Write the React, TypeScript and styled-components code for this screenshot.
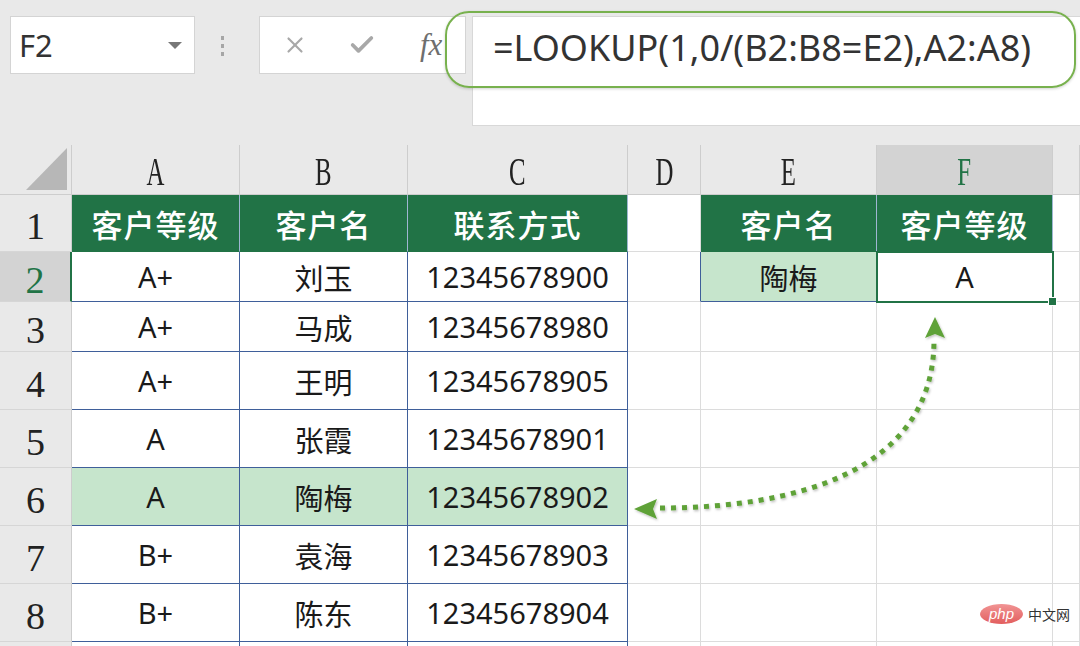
import styled, { createGlobalStyle } from 'styled-components';
import { X, Check } from 'lucide-react';

const GlobalStyle = createGlobalStyle`
  html, body {
    margin: 0;
    padding: 0;
    background: #ffffff;
  }
`;

const GREEN = '#217346';
const BLUE = '#3f5f9a';
const GRID = '#dcdcdc';
const CELL_FONT = `'Noto Sans', 'Noto Sans CJK SC', sans-serif`;

const Page = styled.div`
  position: relative;
  width: 1080px;
  height: 646px;
  overflow: hidden;
  background: #e9e9e9;
  font-family: ${CELL_FONT};
`;

const TopBar = styled.div`
  display: flex;
  align-items: flex-start;
  height: 145px;
  padding: 16px 0 0 10px;
  box-sizing: border-box;
`;

const NameBox = styled.div`
  display: flex;
  align-items: center;
  justify-content: space-between;
  width: 185px;
  height: 58px;
  padding: 0 12px 0 8px;
  box-sizing: border-box;
  background: #fff;
  border: 1px solid #d4d4d4;
  font-size: 31px;
  color: #333;
`;

const Caret = styled.span`
  width: 0;
  height: 0;
  border-left: 7px solid transparent;
  border-right: 7px solid transparent;
  border-top: 7px solid #777;
`;

const Dots = styled.div`
  display: flex;
  flex-direction: column;
  gap: 4px;
  margin: 20px 35px 0 26px;
  span {
    width: 3px;
    height: 4px;
    background: #a6a6a6;
  }
`;

const ButtonBox = styled.div`
  display: flex;
  align-items: center;
  width: 207px;
  height: 58px;
  padding: 0 0 0 22px;
  box-sizing: border-box;
  background: #fff;
  border: 1px solid #d4d4d4;
  color: #a8a8a8;
  gap: 40px;
`;

const Fx = styled.span`
  font-family: 'Liberation Serif', serif;
  font-style: italic;
  font-size: 31px;
  color: #6e6e6e;
  margin-left: 4px;
`;

const FormulaInput = styled.div`
  position: relative;
  flex: 1;
  height: 110px;
  margin-left: 6px;
  padding: 6px 0 0 20px;
  box-sizing: border-box;
  background: #fff;
  border: 1px solid #d8d8d8;
  border-right: none;
  font-family: 'Noto Sans', sans-serif;
  font-size: 36px;
  color: #333;
  white-space: nowrap;
`;

const FormulaRing = styled.div`
  position: absolute;
  left: -28px;
  top: -6px;
  width: 631px;
  height: 77px;
  box-sizing: border-box;
  border: 2px solid #78b14e;
  border-radius: 24px;
  box-shadow: 0 1px 3px rgba(0, 0, 0, 0.18);
  pointer-events: none;
`;

const Sheet = styled.div`
  display: grid;
  grid-template-columns: 72px 168px 168px 220px 73px 176px 176px 27px;
  grid-template-rows: 50px 57px 50px 50px 58px 58px 58px 58px 58px 40px;
  background: #fff;
`;

const Corner = styled.div`
  position: relative;
  background: #e9e9e9;
  border-right: 1px solid #cdcdcd;
  border-bottom: 1px solid #cdcdcd;
  &::after {
    content: '';
    position: absolute;
    right: 4px;
    bottom: 4px;
    width: 41px;
    height: 42px;
    background: #b7b7b7;
    clip-path: polygon(100% 0, 100% 100%, 0 100%);
  }
`;

const ColHead = styled.div<{ $active?: boolean }>`
  display: flex;
  align-items: center;
  justify-content: center;
  box-sizing: border-box;
  background: ${({ $active }) => ($active ? '#d3d3d3' : '#e9e9e9')};
  border-right: 1px solid #cdcdcd;
  border-bottom: 1px solid #cdcdcd;
  color: ${({ $active }) => ($active ? GREEN : '#222')};
  font-family: 'Liberation Serif', serif;
  font-size: 40px;
  line-height: 1;
  overflow: hidden;
  span {
    display: inline-block;
    transform: scaleX(0.62);
    margin-top: 4px;
  }
`;

const RowHead = styled.div<{ $active?: boolean }>`
  display: flex;
  align-items: center;
  justify-content: center;
  padding-top: 6px;
  box-sizing: border-box;
  background: ${({ $active }) => ($active ? '#d3d3d3' : '#e9e9e9')};
  border-right: ${({ $active }) => ($active ? `2px solid ${GREEN}` : '1px solid #cdcdcd')};
  border-bottom: 1px solid #d6d6d6;
  color: ${({ $active }) => ($active ? GREEN : '#222')};
  font-family: 'Liberation Serif', serif;
  font-size: 38px;
  line-height: 1;
`;

type Kind = 'head' | 'data' | 'hl' | 'grid';

const Cell = styled.div<{ $kind: Kind; $edge?: boolean; $selected?: boolean }>`
  position: relative;
  display: flex;
  align-items: center;
  justify-content: center;
  box-sizing: border-box;
  font-size: ${({ $kind }) => ($kind === 'head' ? '31px' : '29px')};
  font-weight: ${({ $kind }) => ($kind === 'head' ? 500 : 400)};
  letter-spacing: ${({ $kind }) => ($kind === 'head' ? '1px' : '0')};
  color: ${({ $kind }) => ($kind === 'head' ? '#fff' : '#1a1a1a')};
  background: ${({ $kind }) =>
    $kind === 'head' ? GREEN : $kind === 'hl' ? '#c6e5cc' : '#fff'};
  border-right: 1px solid
    ${({ $kind, $edge }) =>
      $kind === 'head' ? '#9fb6d2' : $kind === 'grid' && !$edge ? GRID : BLUE};
  border-bottom: 1px solid
    ${({ $kind }) => ($kind === 'head' ? GREEN : $kind === 'grid' ? GRID : BLUE)};
  ${({ $selected }) =>
    $selected &&
    `
    z-index: 1;
    outline: 2px solid ${GREEN};
    outline-offset: -1px;
    &::after {
      content: '';
      position: absolute;
      right: -5px;
      bottom: -5px;
      width: 7px;
      height: 7px;
      background: ${GREEN};
      border: 1px solid #fff;
    }
  `}
`;

const Arrows = styled.svg`
  position: absolute;
  left: 0;
  top: 0;
  pointer-events: none;
`;

const Watermark = styled.div`
  position: absolute;
  right: 10px;
  bottom: 22px;
  display: flex;
  align-items: center;
  gap: 5px;
  font-family: 'Noto Sans CJK SC', sans-serif;
  font-size: 14px;
  color: #333;
`;

const PhpBadge = styled.span`
  display: flex;
  align-items: center;
  justify-content: center;
  width: 43px;
  height: 20px;
  border-radius: 50%;
  background: linear-gradient(#f19494, #e25e5e);
  color: #fff;
  font-family: 'Liberation Sans', sans-serif;
  font-style: italic;
  font-size: 15px;
  line-height: 1;
  padding-bottom: 2px;
  box-sizing: border-box;
`;

const letters = ['A', 'B', 'C', 'D', 'E', 'F', ''];

const tableRows = [
  ['A+', '刘玉', '12345678900'],
  ['A+', '马成', '12345678980'],
  ['A+', '王明', '12345678905'],
  ['A', '张霞', '12345678901'],
  ['A', '陶梅', '12345678902'],
  ['B+', '袁海', '12345678903'],
  ['B+', '陈东', '12345678904'],
];

function Grid(props: { n: number; edge?: boolean }) {
  return (
    <>
      {Array.from({ length: props.n }).map((_, i) => (
        <Cell key={i} $kind="grid" $edge={props.edge} />
      ))}
    </>
  );
}

export default function App() {
  return (
    <Page>
      <GlobalStyle />
      <TopBar>
        <NameBox>
          F2
          <Caret />
        </NameBox>
        <Dots>
          <span />
          <span />
          <span />
        </Dots>
        <ButtonBox>
          <X size={26} strokeWidth={2} />
          <Check size={28} strokeWidth={3.2} />
          <Fx>fx</Fx>
        </ButtonBox>
        <FormulaInput>
          =LOOKUP(1,0/(B2:B8=E2),A2:A8)
          <FormulaRing />
        </FormulaInput>
      </TopBar>

      <Sheet>
        <Corner />
        {letters.map((l, i) => (
          <ColHead key={i} $active={l === 'F'}>
            <span>{l}</span>
          </ColHead>
        ))}

        <RowHead>1</RowHead>
        <Cell $kind="head">客户等级</Cell>
        <Cell $kind="head">客户名</Cell>
        <Cell $kind="head">联系方式</Cell>
        <Cell $kind="grid" />
        <Cell $kind="head">客户名</Cell>
        <Cell $kind="head">客户等级</Cell>
        <Cell $kind="grid" />

        {tableRows.map((r, i) => {
          const kind: Kind = i === 4 ? 'hl' : 'data';
          return [
            <RowHead key={`h${i}`} $active={i === 0}>
              {i + 2}
            </RowHead>,
            ...r.map((v, j) => (
              <Cell key={`c${i}-${j}`} $kind={kind}>
                {v}
              </Cell>
            )),
            i === 0 ? (
              [
                <Cell key="d2" $kind="grid" $edge />,
                <Cell key="e2" $kind="hl">陶梅</Cell>,
                <Cell key="f2" $kind="data" $selected>A</Cell>,
                <Cell key="g2" $kind="grid" />,
              ]
            ) : (
              <Grid key={`g${i}`} n={4} />
            ),
          ];
        })}

        <RowHead />
        <Cell $kind="grid" $edge />
        <Cell $kind="grid" $edge />
        <Cell $kind="grid" $edge />
        <Grid n={4} />
      </Sheet>

      <Arrows width="1080" height="646" viewBox="0 0 1080 646">
        <defs>
          <filter id="soft" x="-10%" y="-10%" width="120%" height="120%">
            <feDropShadow dx="1" dy="1.5" stdDeviation="1" floodColor="#000" floodOpacity="0.25" />
          </filter>
        </defs>
        <g filter="url(#soft)" fill="#5fa238" stroke="none">
          <path
            d="M 660 508 C 790 508, 934 474, 934 340"
            fill="none"
            stroke="#5fa238"
            strokeWidth="5"
            strokeDasharray="5 6"
          />
          <polygon points="634,509 657,499 653,509 657,519" />
          <polygon points="935,317 945,338 935,334 925,338" />
        </g>
      </Arrows>

      <Watermark>
        <PhpBadge>php</PhpBadge>
        中文网
      </Watermark>
    </Page>
  );
}
